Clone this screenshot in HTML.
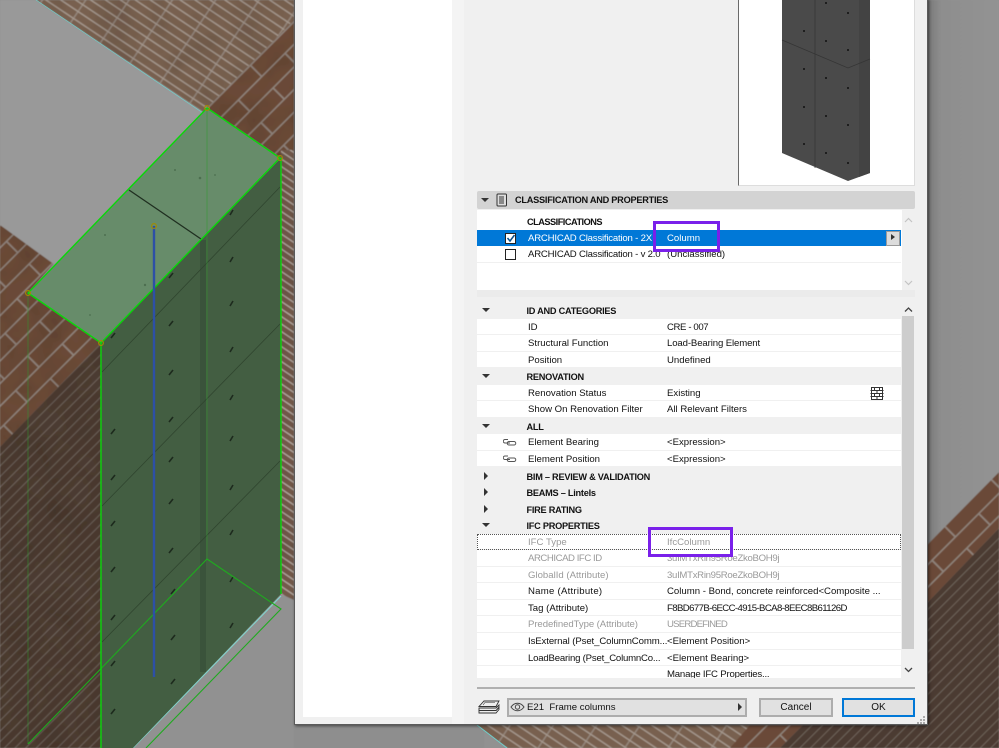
<!DOCTYPE html>
<html><head><meta charset="utf-8"><style>
html,body{margin:0;padding:0;background:#909090}
body{width:999px;height:748px;overflow:hidden;position:relative;font-family:"Liberation Sans",sans-serif;font-size:9.6px;color:#111}
svg.bg{position:absolute;left:0;top:0}
.abs{position:absolute}
.dlg{position:absolute;left:294px;top:-2px;width:632px;height:726px;background:#f0f0f0;border:1px solid #5a5a5a;border-top:0;box-shadow:1px 1px 3px rgba(0,0,0,.55)}
.r{position:absolute;left:477px;width:424px;height:16.55px;line-height:18px;background:#fff;box-shadow:inset 0 -1px 0 #f0f0f0;white-space:nowrap}
.g{background:#f0f0f0;box-shadow:none;font-weight:bold;color:#111;font-size:9.2px;letter-spacing:-.25px}
.r b,.r i,.r s{position:absolute;font-style:normal;font-weight:inherit;text-decoration:none;top:0}
.r b{left:51px}.r i{left:190px}
.g b{left:49.5px}
.d{color:#9a9a9a}
.t{position:absolute;left:5px;top:6px;width:0;height:0;border-left:4px solid transparent;border-right:4px solid transparent;border-top:4px solid #333}
.t.c{left:7px;top:4px;border-top:4px solid transparent;border-bottom:4px solid transparent;border-left:4px solid #333;border-right:0}
.btn{position:absolute;top:698px;height:15px;background:#e1e1e1;border:2px solid #adadad;text-align:center;line-height:15px;font-size:10px;color:#111}
.p{position:absolute;border:3px solid #7a20ea;box-sizing:border-box}
.soft{filter:blur(.3px)}
</style></head><body>
<svg class="bg" width="999" height="748" viewBox="0 0 999 748">
<defs>
<filter id="n" x="0" y="0" width="100%" height="100%"><feTurbulence type="fractalNoise" baseFrequency=".03" numOctaves="3" seed="4"/><feColorMatrix values="0 0 0 0 0 0 0 0 0 0 0 0 0 0 0 1.3 0 0 0 -.45"/></filter>
<filter id="b"><feGaussianBlur stdDeviation=".55"/></filter>
<pattern id="thin" width="36" height="8.300" patternUnits="userSpaceOnUse" patternTransform="rotate(33.8)">
<rect width="36" height="8.300" fill="#78604f"/><rect y="7" width="36" height="1.300" fill="#a89c92"/><rect x="34.500" width="1.500" height="7" fill="#94867c"/></pattern>
<pattern id="big" width="66" height="32" patternUnits="userSpaceOnUse" patternTransform="rotate(-45)">
<rect width="66" height="32" fill="#6b4a37"/><rect y="14.500" width="66" height="1.500" fill="#8f837b"/><rect y="30.500" width="66" height="1.500" fill="#8f837b"/><rect x="64" width="1.800" height="15" fill="#8f837b"/><rect x="31" y="16" width="1.800" height="15" fill="#8f837b"/></pattern>
<pattern id="dark" width="40" height="7.500" patternUnits="userSpaceOnUse" patternTransform="rotate(-45)">
<rect width="40" height="7.500" fill="#4c3b30"/><rect y="6.600" width="40" height=".9" fill="#71675f"/></pattern>
<pattern id="strip" width="13" height="7.500" patternUnits="userSpaceOnUse" patternTransform="skewY(34)">
<rect width="13" height="7.500" fill="#735a4b"/><rect y="6" width="13" height="1.500" fill="#b5aaa2"/></pattern>
<linearGradient id="rg" x1="0" x2="1"><stop offset="0" stop-color="#787878"/><stop offset=".2" stop-color="#8e8e8e"/><stop offset="1" stop-color="#939393"/></linearGradient>
</defs>
<g filter="url(#b)">
<rect width="999" height="748" fill="#919191"/>
<polygon points="36,0 294,0 294,20 207,108 205,113" fill="url(#thin)"/>
<polygon points="207,108 294,20 294,167 281,158" fill="url(#big)"/>
<rect x="281" y="150" width="13" height="455" fill="url(#strip)"/>
<polygon points="0,225 55,262 28,293 101,343 0,447" fill="url(#big)"/>
<polygon points="0,447 101,343 101,748 0,748" fill="url(#dark)"/>
<rect width="294" height="748" filter="url(#n)" opacity=".14"/>
<polygon points="0,0 36,0 205,113 55,265 0,225" fill="#999"/>
<polygon points="281,594 294,600 294,748 133,748" fill="#919191"/>
<!-- bottom strip -->
<rect x="294" y="720" width="190" height="28" fill="#8e8e8e"/>
<polygon points="477,725 800,725 740,748 507,748" fill="url(#thin)"/>
<polygon points="750,725 803,725 780,748 730,748" fill="url(#big)"/>
<polygon points="803,725 927,725 927,603 999,528 999,748 780,748" fill="url(#dark)"/>
<polygon points="927,545 999,472 999,528 927,603" fill="url(#big)"/>
<polygon points="927,0 999,0 999,472 927,545" fill="url(#rg)"/>
</g>
<line x1="36" y1="0" x2="203" y2="113" stroke="#6fd0cc" stroke-width=".7"/>
<line x1="133" y1="748" x2="281" y2="596" stroke="#7fd8d0" stroke-width="1"/>
<line x1="477" y1="725" x2="507" y2="748" stroke="#6fd0cc" stroke-width="1"/>
<!-- wall -->
<polygon points="281,158 281,594 133,748 101,748 101,343" fill="#435e42"/>
<rect x="200" y="240" width="6" height="432" fill="#3a533b"/>
<g stroke="#30452f" stroke-width=".8" fill="none"><path d="M102 372L280 187"/><path d="M102 506L280 324"/><path d="M102 642L280 461"/></g>
<g stroke="#1d2a1d" stroke-width="1.600">
<path d="M111 338l4-5M111 434l4-5M111 480l4-5M111 526l4-5M111 572l4-5M111 620l4-5M111 666l4-5M111 714l4-5M169 278l4-5M169 326l4-5M169 375l4-5M169 422l4-5M169 462l4-5M169 504l4-5M169 553l4-5M171 594l4-5M171 640l4-5M171 684l4-5M230 215l3-5M230 262l3-5M230 306l3-5M230 352l3-5M230 400l3-5M230 441l3-5M230 490l3-5M230 535l3-5M230 582l3-5M230 628l3-5"/></g>
<!-- top face -->
<polygon points="207,108 280,158 101,343 28,293" fill="#678c6a"/>
<g fill="#4d6f50"><circle cx="200" cy="178" r="1.300"/><circle cx="145" cy="285" r="1.200"/><circle cx="105" cy="235" r="1"/><circle cx="175" cy="170" r="1"/><circle cx="90" cy="315" r=".9"/><circle cx="215" cy="175" r=".9"/></g>
<line x1="129" y1="190" x2="201" y2="239" stroke="#1f2f20" stroke-width="1.300"/>
<g fill="none" stroke="#2f9a2f" stroke-width=".8" opacity=".65"><line x1="28" y1="293" x2="28" y2="744"/><line x1="207" y1="108" x2="207" y2="559"/></g>
<g fill="none" stroke="#1faa1f" stroke-width="1.100"><path d="M28 744L207 559L281 609L146 748"/></g>
<g fill="none" stroke="#08d808" stroke-width="1.400"><path d="M207 108L280 158L101 343L28 293Z"/><path d="M101 343V748"/><path d="M281 158V594"/></g>
<line x1="154" y1="226" x2="154" y2="677" stroke="#2d50a6" stroke-width="2.400"/>
<g fill="none" stroke="#a38a00" stroke-width="1.100"><circle cx="207" cy="108" r="2.400"/><circle cx="280" cy="158" r="2.400"/><circle cx="28" cy="293" r="2.400"/><circle cx="101" cy="343" r="2.400"/><circle cx="154" cy="226" r="2.400"/></g>
</svg>

<div class="dlg"></div>
<div class="abs" style="left:303px;top:0;width:149px;height:717px;background:#fff"></div>
<div class="abs" style="left:452px;top:0;width:12px;height:724px;background:#f4f4f4"></div>

<!-- preview -->
<div class="abs" style="left:738px;top:0;width:175px;height:185px;background:#fff;border-left:1px solid #6a6a6a;border-right:1px solid #ddd;border-bottom:1px solid #ddd"></div>
<svg class="abs" style="left:739px;top:0" width="175" height="185" viewBox="739 0 175 185">
<polygon points="782,0 870,0 870,173 848,181 782,153" fill="#4a4a4a"/>
<polygon points="859,0 870,0 870,173 859,177" fill="#434343"/>
<g fill="none" stroke="#353535" stroke-width=".7"><path d="M782 40L848 68L870 59"/><path d="M815 0V168"/></g>
<g fill="#111"><circle cx="804" cy="31" r="1"/><circle cx="804" cy="69" r="1"/><circle cx="804" cy="107" r="1"/><circle cx="804" cy="144" r="1"/><circle cx="826" cy="3" r="1"/><circle cx="826" cy="41" r="1"/><circle cx="826" cy="78" r="1"/><circle cx="826" cy="116" r="1"/><circle cx="826" cy="153" r="1"/><circle cx="848" cy="13" r="1"/><circle cx="848" cy="50" r="1"/><circle cx="848" cy="88" r="1"/><circle cx="848" cy="125" r="1"/><circle cx="848" cy="163" r="1"/></g>
</svg>

<!-- section header -->
<div class="abs" style="left:477px;top:191px;width:438px;height:18px;background:#d3d3d3;border-radius:2px"></div>
<div class="t abs" style="left:481px;top:198px"></div>
<svg class="abs" style="left:495px;top:192px" width="14" height="16" viewBox="0 0 14 16"><rect x="2" y="2" width="9.500" height="12" rx="1" fill="#ddd" stroke="#333"/><path d="M4 5h5M4 7h5M4 9h5M4 11h5" stroke="#333" stroke-width=".9"/></svg>
<div class="abs soft" style="left:515px;top:192px;line-height:16px;font-weight:bold;color:#111;font-size:9.2px;letter-spacing:-.25px">CLASSIFICATION AND PROPERTIES</div>

<!-- classification list -->
<div class="abs" style="left:477px;top:210px;width:425px;height:80px;background:#fff"></div>
<div class="abs" style="left:477px;top:290px;width:438px;height:7px;background:#ebebeb"></div>
<div class="abs soft" style="left:527px;top:214px;line-height:17px;font-weight:bold;font-size:9.2px;letter-spacing:-.5px">CLASSIFICATIONS</div>
<div class="r soft" style="top:230px;height:16px;background:#0078d7;box-shadow:none;color:#fff"><b style="letter-spacing:-.2px">ARCHICAD Classification - 2X</b><i>Column</i></div>
<div class="abs" style="left:505px;top:233px;width:9px;height:9px;background:#fff;border:1px solid #222"></div>
<svg class="abs" style="left:505px;top:232px" width="12" height="12" viewBox="0 0 12 12"><path d="M2.500 6l2.500 3 4.500-6" fill="none" stroke="#0b4f8a" stroke-width="1.500"/></svg>
<div class="abs" style="left:886px;top:231px;width:12px;height:13px;background:#dcdcdc;border:1px solid #9a9a9a"></div>
<div class="t c abs" style="left:891px;top:234px;border-top-width:3.5px;border-bottom-width:3.5px"></div>
<div class="r soft" style="top:246px;height:17px"><b style="letter-spacing:-.2px">ARCHICAD Classification - v 2.0</b><i>(Unclassified)</i></div>
<div class="abs" style="left:505px;top:249px;width:9px;height:9px;background:#fff;border:1px solid #222"></div>
<svg class="abs" style="left:902px;top:215px" width="13" height="75" viewBox="0 0 13 75"><path d="M3 7l3.500-3.500L10 7M3 66l3.500 3.500L10 66" fill="none" stroke="#c4c4c4" stroke-width="1.200"/></svg>

<!-- properties -->
<div class="abs soft" style="left:477px;top:302px;width:424px;height:376px;overflow:hidden">
<div style="position:absolute;left:-477px;top:-302px;width:999px;height:748px">
<div class="r g" style="top:302px"><span class="t"></span><b>ID AND CATEGORIES</b></div>
<div class="r" style="top:318.55px"><b>ID</b><i style="letter-spacing:-.4px">CRE - 007</i></div>
<div class="r" style="top:335.1px"><b>Structural Function</b><i style="letter-spacing:-.12px">Load-Bearing Element</i></div>
<div class="r" style="top:351.65px"><b>Position</b><i>Undefined</i></div>
<div class="r g" style="top:368.2px"><span class="t"></span><b>RENOVATION</b></div>
<div class="r" style="top:384.75px"><b>Renovation Status</b><i>Existing</i></div>
<div class="r" style="top:401.3px"><b>Show On Renovation Filter</b><i>All Relevant Filters</i></div>
<div class="r g" style="top:417.85px"><span class="t"></span><b>ALL</b></div>
<div class="r" style="top:434.4px"><b>Element Bearing</b><i>&lt;Expression&gt;</i></div>
<div class="r" style="top:450.95px"><b>Element Position</b><i>&lt;Expression&gt;</i></div>
<div class="r g" style="top:467.5px"><span class="t c"></span><b>BIM – REVIEW &amp; VALIDATION</b></div>
<div class="r g" style="top:484.05px"><span class="t c"></span><b>BEAMS – Lintels</b></div>
<div class="r g" style="top:500.6px"><span class="t c"></span><b>FIRE RATING</b></div>
<div class="r g" style="top:517.15px"><span class="t"></span><b>IFC PROPERTIES</b></div>
<div class="r d" style="top:533.7px;outline:1px dotted #555;outline-offset:-1px"><b>IFC Type</b><i>IfcColumn</i></div>
<div class="r d" style="top:550.25px"><b style="letter-spacing:-.45px">ARCHICAD IFC ID</b><i style="letter-spacing:-.3px">3uIMTxRin95RoeZkoBOH9j</i></div>
<div class="r d" style="top:566.8px"><b>GlobalId (Attribute)</b><i style="letter-spacing:-.3px">3uIMTxRin95RoeZkoBOH9j</i></div>
<div class="r" style="top:583.35px"><b style="letter-spacing:.25px">Name (Attribute)</b><i>Column - Bond, concrete reinforced&lt;Composite ...</i></div>
<div class="r" style="top:599.9px"><b>Tag (Attribute)</b><i style="letter-spacing:-.6px">F8BD677B-6ECC-4915-BCA8-8EEC8B61126D</i></div>
<div class="r d" style="top:616.45px"><b style="letter-spacing:-.08px">PredefinedType (Attribute)</b><i style="letter-spacing:-.8px">USERDEFINED</i></div>
<div class="r" style="top:633px"><b style="letter-spacing:-.1px">IsExternal (Pset_ColumnComm...</b><i>&lt;Element Position&gt;</i></div>
<div class="r" style="top:649.55px"><b style="letter-spacing:-.2px">LoadBearing (Pset_ColumnCo...</b><i>&lt;Element Bearing&gt;</i></div>
<div class="r" style="top:666.1px"><i style="letter-spacing:-.2px">Manage IFC Properties...</i></div>
</div></div>
<svg class="abs" style="left:503px;top:437px" width="14" height="28" viewBox="0 0 14 28" fill="none" stroke="#555" stroke-width="1"><path d="M5 2.500H2a1.500 1.500 0 0 0 0 3.500h5M6 4.500h5a1.500 1.500 0 0 1 0 3.500H6a1.500 1.500 0 0 1 0-3.500"/><path d="M5 19H2a1.500 1.500 0 0 0 0 3.500h5M6 21h5a1.500 1.500 0 0 1 0 3.500H6a1.500 1.500 0 0 1 0-3.500"/></svg>
<svg class="abs" style="left:870px;top:387px" width="14" height="14" viewBox="0 0 14 14" fill="#fff" stroke="#333" stroke-width="1"><path d="M1.500.5h11v12h-11zM.5 3.500h13M.5 6.500h13M.5 9.500h13M4.500.5v3M9.500.5v3M7 3.500v3M4.500 6.500v3M9.500 6.500v3M7 9.500v3"/></svg>

<!-- scrollbar -->
<div class="abs" style="left:902px;top:316px;width:12px;height:333px;background:#cdcdcd"></div>
<svg class="abs" style="left:902px;top:302px" width="13" height="376" viewBox="0 0 13 376"><path d="M3 9.500l3.500-3.500L10 9.500M3 366l3.500 3.500L10 366" fill="none" stroke="#444" stroke-width="1.300"/></svg>

<!-- bottom -->
<div class="abs" style="left:477px;top:687px;width:438px;height:2px;background:#b0b0b0"></div>
<svg class="abs" style="left:477px;top:698px" width="24" height="18" viewBox="0 0 24 18" fill="#eee" stroke="#333" stroke-width=".9"><path d="M2 12.500h17l3-3v2l-3 3.500H2z"/><path d="M2 10h17l3-3v2l-3 3.500H2z"/><path d="M2 8.500L7 3h15l-3 5.500z"/><path d="M6 7l2-2.500h10" stroke-width=".6"/></svg>
<div class="abs" style="left:507px;top:698px;width:236px;height:15px;background:#e1e1e1;border:2px solid #adadad;line-height:15px"></div>
<svg class="abs" style="left:510px;top:701px" width="15" height="12" viewBox="0 0 15 12" fill="none" stroke="#444"><path d="M1 6c3.500-5 9.500-5 13 0c-3.500 5-9.500 5-13 0z"/><circle cx="7.500" cy="6" r="2.200"/></svg>
<div class="abs soft" style="left:527px;top:700px;line-height:16px;white-space:pre">E21  Frame columns</div>
<div class="t c abs" style="left:738px;top:703px"></div>
<div class="btn soft" style="left:759px;width:70px">Cancel</div>
<div class="btn" style="left:842px;width:69px;border-color:#0078d7"><span class="soft">OK</span></div>
<svg class="abs" style="left:917px;top:715px" width="9" height="9" fill="#aaa"><rect x="6" y="1" width="2" height="2"/><rect x="3" y="4" width="2" height="2"/><rect x="6" y="4" width="2" height="2"/><rect x="0" y="7" width="2" height="2"/><rect x="3" y="7" width="2" height="2"/><rect x="6" y="7" width="2" height="2"/></svg>

<!-- purple highlights -->
<div class="p" style="left:653px;top:221px;width:67px;height:31px"></div>
<div class="p" style="left:648px;top:527px;width:85px;height:30px"></div>
</body></html>
